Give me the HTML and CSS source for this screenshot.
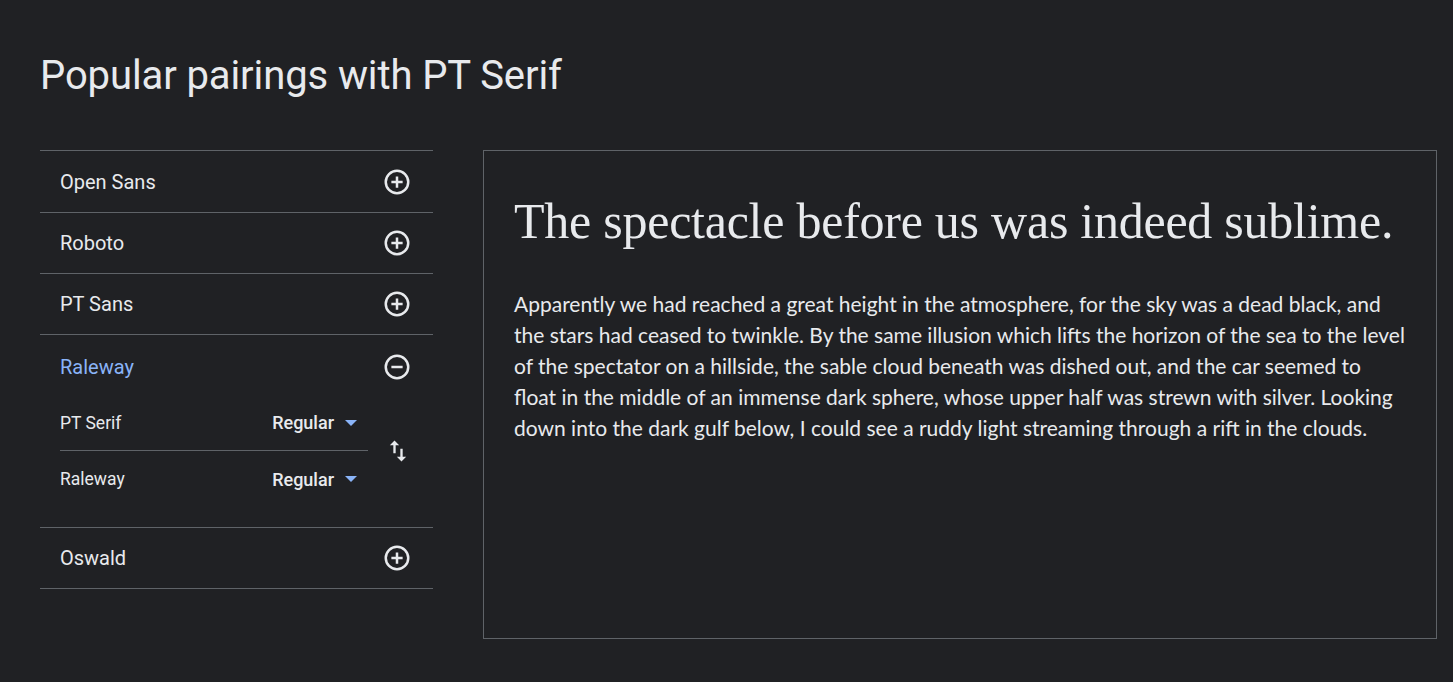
FILE: index.html
```html
<!DOCTYPE html>
<html lang="en">
<head>
<meta charset="utf-8">
<title>Popular pairings with PT Serif</title>
<link rel="stylesheet" href="styles.css">
</head>
<body>
<main class="page">
  <h1 class="title">Popular pairings with PT Serif</h1>
  <div class="content">
    <ul class="pairings">
      <li class="pair">
        <div class="pair-head">
          <span class="pair-name">Open Sans</span>
          <svg class="toggle" viewBox="0 0 24 24"><circle cx="12" cy="12" r="9" fill="none" stroke="currentColor" stroke-width="2"/><path d="M12 7.5v9M7.5 12h9" stroke="currentColor" stroke-width="2"/></svg>
        </div>
      </li>
      <li class="pair">
        <div class="pair-head">
          <span class="pair-name">Roboto</span>
          <svg class="toggle" viewBox="0 0 24 24"><circle cx="12" cy="12" r="9" fill="none" stroke="currentColor" stroke-width="2"/><path d="M12 7.5v9M7.5 12h9" stroke="currentColor" stroke-width="2"/></svg>
        </div>
      </li>
      <li class="pair">
        <div class="pair-head">
          <span class="pair-name">PT Sans</span>
          <svg class="toggle" viewBox="0 0 24 24"><circle cx="12" cy="12" r="9" fill="none" stroke="currentColor" stroke-width="2"/><path d="M12 7.5v9M7.5 12h9" stroke="currentColor" stroke-width="2"/></svg>
        </div>
      </li>
      <li class="pair pair-open">
        <div class="pair-head">
          <span class="pair-name">Raleway</span>
          <svg class="toggle" viewBox="0 0 24 24"><circle cx="12" cy="12" r="9" fill="none" stroke="currentColor" stroke-width="2"/><path d="M7.5 12h9" stroke="currentColor" stroke-width="2"/></svg>
        </div>
        <div class="pair-body">
          <div class="styles">
            <div class="style-row">
              <span class="style-font">PT Serif</span>
              <span class="style-select">Regular<span class="caret"></span></span>
            </div>
            <div class="style-row">
              <span class="style-font">Raleway</span>
              <span class="style-select">Regular<span class="caret"></span></span>
            </div>
          </div>
          <svg class="swap" viewBox="0 0 24 24"><path d="M16 17.01V10h-2v7.01h-3L15 21l4-3.99h-3zM9 3L5 6.99h3V14h2V6.99h3L9 3z" fill="currentColor"/></svg>
        </div>
      </li>
      <li class="pair">
        <div class="pair-head">
          <span class="pair-name">Oswald</span>
          <svg class="toggle" viewBox="0 0 24 24"><circle cx="12" cy="12" r="9" fill="none" stroke="currentColor" stroke-width="2"/><path d="M12 7.5v9M7.5 12h9" stroke="currentColor" stroke-width="2"/></svg>
        </div>
      </li>
    </ul>
    <section class="preview">
      <h2 class="preview-head">The spectacle before us was indeed sublime.</h2>
      <p class="preview-body">Apparently we had reached a great height in the atmosphere, for the sky was a dead black, and<br>the stars had ceased to twinkle. By the same illusion which lifts the horizon of the sea to the level<br>of the spectator on a hillside, the sable cloud beneath was dished out, and the car seemed to<br>float in the middle of an immense dark sphere, whose upper half was strewn with silver. Looking<br>down into the dark gulf below, I could see a ruddy light streaming through a rift in the clouds.</p>
    </section>
  </div>
</main>
</body>
</html>
```

FILE: styles.css
```css
html, body {
  margin: 0;
  padding: 0;
  background: #202124;
  color: #e8eaed;
  font-family: Roboto, "Liberation Sans", sans-serif;
}

.page {
  padding: 0 16px 0 40px;
}

.title {
  margin: 52px 0 50px;
  font-size: 40px;
  line-height: 48px;
  font-weight: 400;
  letter-spacing: -0.1px;
  color: #e8eaed;
}

.content {
  display: flex;
  align-items: flex-start;
  gap: 50px;
}

.pairings {
  list-style: none;
  margin: 0;
  padding: 0;
  width: 393px;
  flex: none;
  border-top: 1px solid #5f6368;
}

.pair {
  border-bottom: 1px solid #5f6368;
}

.pair-head {
  height: 60px;
  display: flex;
  align-items: center;
  justify-content: space-between;
  padding: 0 21px 0 20px;
}

.pair:first-child .pair-head {
  height: 61px;
}

.pair-name {
  font-size: 20px;
}

.pair-open .pair-name {
  color: #8ab4f8;
}

.pair-open .pair-head {
  padding-top: 4px;
  height: 56px;
}

.toggle {
  width: 30px;
  height: 30px;
  color: #e8eaed;
}

.pair-body {
  display: flex;
  align-items: center;
  padding: 0 21px 20px 20px;
}

.styles {
  width: 308px;
}

.style-row {
  height: 55px;
  display: flex;
  align-items: center;
  justify-content: space-between;
  padding-right: 11px;
  font-size: 17.5px;
}

.style-row + .style-row {
  border-top: 1px solid #5f6368;
  height: 56px;
}

.style-select {
  display: flex;
  align-items: center;
  font-weight: 500;
  font-size: 18px;
}

.caret {
  width: 0;
  height: 0;
  margin-left: 11px;
  border-left: 6px solid transparent;
  border-right: 6px solid transparent;
  border-top: 6px solid #8ab4f8;
}

.swap {
  width: 28px;
  height: 28px;
  margin-left: auto;
  color: #e8eaed;
}

.preview {
  flex: 1;
  min-width: 0;
  height: 487px;
  border: 1px solid #5f6368;
  padding: 0 30px;
  overflow: hidden;
}

.preview-head {
  margin: 40px 0 0;
  font-family: "Liberation Serif", serif;
  font-weight: 400;
  font-size: 50px;
  line-height: 60px;
  letter-spacing: -0.25px;
}

.preview-body {
  margin: 37px 0 0;
  font-family: Lato, sans-serif;
  font-size: 21px;
  line-height: 31px;
  white-space: nowrap;
}
```
